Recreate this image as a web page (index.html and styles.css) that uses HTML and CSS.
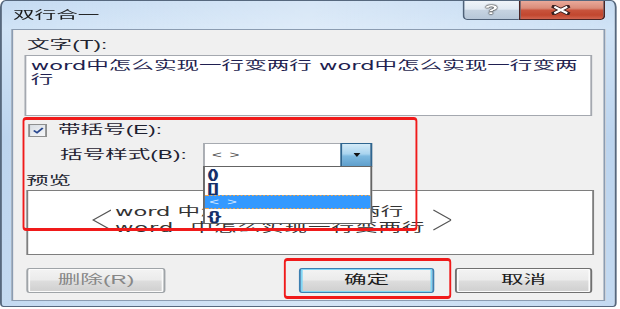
FILE: index.html
```html
<!DOCTYPE html>
<html lang="zh-CN">
<head>
<meta charset="utf-8">
<title>双行合一</title>
<link rel="stylesheet" href="styles.css">
</head>
<body>
<div class="stage">
  <div class="window">
    <div class="titlebar">
      <span class="title">双行合一</span>
      <div class="caption">
        <div class="cbtn help"><span class="qmark">?</span></div>
        <div class="cbtn close">
          <svg class="xmark" viewBox="0 0 20 10" preserveAspectRatio="none">
            <path d="M3 1.5 L17 8.5 M17 1.5 L3 8.5" stroke="#3a2020" stroke-width="4" stroke-linecap="square" fill="none"/>
            <path d="M3.5 1.8 L16.5 8.2 M16.5 1.8 L3.5 8.2" stroke="#ffffff" stroke-width="2.2" stroke-linecap="butt" fill="none"/>
          </svg>
        </div>
      </div>
    </div>
    <div class="client">
      <div class="lbl">文字(T):</div>
      <div class="textbox">word中怎么实现一行变两行 word中怎么实现一行变两<br>行</div>
      <div class="check-row">
        <span class="checkbox">
          <svg viewBox="0 0 13 13" preserveAspectRatio="none"><path d="M3 6.5 L5.6 9.2 L10.2 3.6" stroke="#27468e" stroke-width="1.7" fill="none"/></svg>
        </span>
        <span class="check-label">带括号(E):</span>
      </div>
      <div class="style-row">
        <span class="style-label">括号样式(B):</span>
        <div class="combo">
          <span class="combo-text">&lt; &gt;</span>
          <span class="combo-btn">
            <svg class="arrow" viewBox="0 0 7 4" preserveAspectRatio="none"><path d="M0 0 H7 L3.5 4 Z" fill="#111"/></svg>
          </span>
          <ul class="dropdown">
            <li class="item br">()</li>
            <li class="item br">[]</li>
            <li class="item sel">&lt; &gt;</li>
            <li class="item br">{}</li>
          </ul>
        </div>
      </div>
      <div class="lbl preview-label">预览</div>
      <div class="preview">
        <svg class="bracket" viewBox="0 0 20 22" preserveAspectRatio="none"><polyline points="19,1 1,11 19,21" stroke="#555" stroke-width="1.3" fill="none"/></svg>
        <div class="lines">
          <div class="pline">word 中怎么实现一行变两行</div>
          <div class="pline wide">word &nbsp;中怎么实现一行变两行</div>
        </div>
        <svg class="bracket right" viewBox="0 0 20 22" preserveAspectRatio="none"><polyline points="1,1 19,11 1,21" stroke="#555" stroke-width="1.3" fill="none"/></svg>
      </div>
      <div class="buttons">
        <div class="btn disabled">删除(R)</div>
        <div class="btn default">确定</div>
        <div class="btn">取消</div>
      </div>
    </div>
  </div>
  <div class="mark mark1"></div>
  <div class="mark mark2"></div>
</div>
</body>
</html>
```
FILE: styles.css
```css
* { box-sizing: border-box; }
html, body { margin: 0; padding: 0; background: #ffffff; overflow: hidden; }
body { width: 620px; height: 309px; }

.stage {
  position: relative;
  width: 329.8px;
  height: 309px;
  transform: scaleX(1.88);
  transform-origin: 0 0;
  font-family: "Liberation Sans", "Noto Sans CJK SC", sans-serif;
  font-size: 12px;
  color: #1e2130;
}

.window {
  width: 328.2px;
  height: 307px;
  border: 1px solid #56687e;
  border-radius: 3px 3px 2px 2px / 7px 7px 4px 4px;
  padding: 0 5.4px 5px 5.4px;
  display: flex;
  flex-direction: column;
  background:
    linear-gradient(90deg, rgba(255,255,255,0) 0%, rgba(255,255,255,.30) 50%, rgba(255,255,255,.12) 78%, rgba(255,255,255,0) 100%),
    linear-gradient(180deg, #c5dbf2 0%, #d0e3f6 9%, #bcd4ee 45%, #c4daf1 100%);
}

.titlebar { height: 28px; display: flex; align-items: flex-start; flex: none; }
.title { margin: 6px 0 0 0.5px; line-height: 16px; font-size: 11.5px; color: #1a1a1a; }
.caption { margin-left: auto; display: flex; height: 19px; }
.cbtn { height: 19px; display: flex; align-items: center; justify-content: center; }
.help {
  width: 29.2px;
  border: 1px solid #4f6178;
  border-top: none;
  border-right: none;
  border-radius: 0 0 0 2.5px / 0 0 0 5px;
  background: linear-gradient(180deg, #f0f4f9 0%, #e1e9f2 45%, #c6d3e1 52%, #b7c7d8 100%);
}
.qmark {
  font-family: "Liberation Sans", sans-serif;
  font-weight: bold;
  font-size: 12px;
  line-height: 12px;
  color: #ffffff;
  text-shadow: 0 0 1px #2a2a2a, 0 0 1px #2a2a2a, 0 0 1px #2a2a2a;
}
.close {
  width: 46.3px;
  border: 1px solid #4a2424;
  border-top: none;
  border-radius: 0 0 2.5px 0 / 0 0 5px 0;
  background: linear-gradient(180deg, #e9a99a 0%, #da8c79 40%, #c8533c 52%, #c2472f 78%, #d16550 100%);
}
.xmark { width: 10.6px; height: 10px; display: block; }

.client {
  flex: 1;
  border: 1px solid #8b9cb1;
  background: #f0f0f0;
  padding: 7px 5.4px 0 5.4px;
  display: flex;
  flex-direction: column;
}

.lbl { line-height: 16px; height: 16px; margin-left: 1.6px; color: #20232f; }

.textbox {
  margin-top: 2px;
  height: 61px;
  border: 1px solid #a4a8af;
  background: #ffffff;
  padding: 3px 2.6px;
  font-family: "DejaVu Sans", "Noto Sans CJK SC", sans-serif;
  line-height: 14px;
  color: #1f1f50;
  white-space: nowrap;
}

.check-row { margin-top: 6px; height: 16px; display: flex; align-items: center; margin-left: 2.1px; }
.checkbox {
  width: 10.6px;
  height: 13px;
  border: 1px solid #8e8f8f;
  background: linear-gradient(135deg, #d8dde3 0%, #f6f7f9 100%);
  display: block;
}
.checkbox svg { width: 100%; height: 100%; display: block; }
.check-label { margin-left: 5.4px; line-height: 16px; }

.style-row { margin-top: 5px; height: 24px; display: flex; align-items: center; padding-left: 19.2px; }
.style-label { width: 76px; flex: none; line-height: 16px; }
.combo {
  position: relative;
  width: 90.4px;
  height: 24px;
  border: 1px solid #a6aab0;
  background: #ffffff;
  display: flex;
}
.combo-text {
  flex: 1;
  padding-left: 3.8px;
  line-height: 22px;
  font-size: 9px;
  letter-spacing: 0.8px;
  color: #4a4a4a;
}
.combo-btn {
  width: 17px;
  height: 24px;
  margin: -1px -1px -1px 0;
  border: 1px solid #2f6690;
  background: linear-gradient(180deg, #d4ebf8 0%, #a9d4ef 45%, #7db9e0 55%, #5f9fcc 100%);
  display: flex;
  align-items: center;
  justify-content: center;
}
.arrow { width: 3.7px; height: 4px; display: block; }

.dropdown {
  position: absolute;
  top: 22px;
  left: -1px;
  width: 90.4px;
  height: 58px;
  margin: 0;
  padding: 0;
  list-style: none;
  border: 1px solid #646464;
  background: #ffffff;
  z-index: 5;
}
.item { height: 14px; line-height: 14px; padding-left: 1.2px; }
.item.br {
  font-weight: bold;
  font-size: 12px;
  letter-spacing: -1.6px;
  color: #15306a;
}
.item.sel {
  background: #3399ff;
  border-top: 1px dotted #f2a54a;
  border-bottom: 1px dotted #f2a54a;
  line-height: 12px;
  font-size: 9px;
  letter-spacing: 0.8px;
  color: #dcecff;
  padding-left: 2.4px;
}

.preview-label { margin-top: 6px; margin-left: 1px; }
.preview {
  margin-top: 1px;
  height: 65px;
  margin-left: 1.6px;
  margin-right: -0.6px;
  border: 1px solid #7e7e7e;
  background: #ffffff;
  padding: 13px 0 0 33.5px;
  display: flex;
  align-items: center;
  align-self: stretch;
}
.preview { align-items: flex-start; }
.bracket { width: 10.6px; height: 22px; display: block; margin-top: 5px; flex: none; }
.bracket.right { margin-left: 3.5px; }
.lines {
  margin-left: 1.7px;
  font-family: "DejaVu Sans", "Noto Sans CJK SC", sans-serif;
  color: #333333;
}
.pline { line-height: 16px; height: 16px; white-space: nowrap; }
.pline.wide { letter-spacing: 0.5px; }

.buttons { margin-top: 13px; height: 25px; display: flex; padding: 0 0.5px 0 1.6px; flex: none; }
.btn {
  width: 72.9px;
  height: 25px;
  border: 1px solid #707070;
  border-radius: 1.6px / 3px;
  background: linear-gradient(180deg, #f3f3f3 0%, #ebebeb 48%, #dddddd 52%, #cfcfcf 100%);
  box-shadow: inset 0 0 0 1px #fbfbfb;
  text-align: center;
  line-height: 23px;
  color: #1a1a1a;
}
.btn.disabled { width: 73.4px; color: #878787; border-color: #9fa4a8; margin-right: auto; }
.btn.default {
  border-color: #3c7fb1;
  box-shadow: inset 0 0 0 1px #7fd6f5;
  margin-right: 10.6px;
}

.mark {
  position: absolute;
  border-style: solid;
  border-color: #f01a1a;
  border-width: 3px 1.7px;
  border-radius: 2px / 4px;
  z-index: 10;
}
.mark1 { left: 11.7px; top: 117px; width: 210.1px; height: 114px; }
.mark2 { left: 151.1px; top: 258px; width: 89.4px; height: 41px; }
```
